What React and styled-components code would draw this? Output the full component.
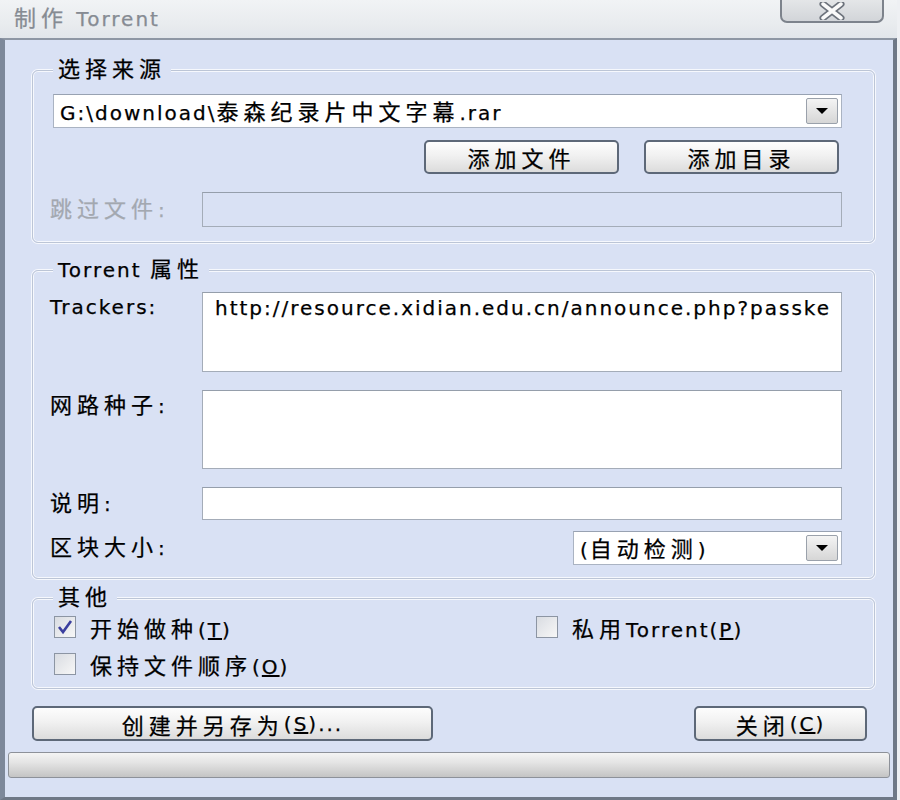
import React from 'react';
import styled, { createGlobalStyle } from 'styled-components';

const GlobalStyle = createGlobalStyle`
  html, body {
    margin: 0;
    padding: 0;
    background: #eef0f3;
  }
  body {
    font-family: "DejaVu Sans", "Noto Sans CJK SC", sans-serif;
    font-size: 20px;
    color: #000;
    -webkit-text-stroke: 0.25px currentColor;
  }
`;

const PANEL = '#d9e1f4';

const Window = styled.div`
  width: 897px;
  height: 800px;
  display: flex;
  flex-direction: column;
`;

const TitleBar = styled.div`
  height: 38px;
  box-sizing: border-box;
  flex-shrink: 0;
  display: flex;
  align-items: center;
  justify-content: space-between;
  padding: 0 0 6px 14px;
  background: linear-gradient(180deg, #f1f3f5 0%, #e9ecef 60%, #e2e6ea 100%);
`;

const Title = styled.span`
  color: #868b93;
  letter-spacing: 2px;
`;

const CloseButton = styled.div`
  align-self: flex-start;
  width: 100px;
  height: 21px;
  margin-right: 13px;
  border: 2px solid #7d838c;
  border-top: none;
  border-radius: 0 0 7px 7px;
  background: linear-gradient(180deg, #e4e6e8, #d2d5d9);
  display: flex;
  align-items: center;
  justify-content: center;
`;

const Body = styled.div`
  flex: 1;
  display: flex;
  flex-direction: column;
  background: ${PANEL};
  border-top: 2px solid #8e97a4;
  border-left: 5px solid #7d889a;
  border-right: 4px solid #6f7886;
  border-bottom: 3px solid #6f7886;
  padding: 0 3px;
  min-width: 0;
`;

const Group = styled.fieldset`
  margin: ${(p) => p.$top}px 15px 0 24px;
  padding: 0;
  min-width: 0;
  border: 1px solid #bcc5d6;
  border-radius: 6px;
  box-shadow: 0 0 0 1px #f6f8fd, inset 0 0 0 1px #f6f8fd;
`;

const Legend = styled.legend`
  margin-left: 20px;
  padding: 0 5px;
  line-height: 24px;
  background: ${PANEL};
  letter-spacing: 2px;
`;

const GroupContent = styled.div`
  padding: ${(p) => p.$pad};
`;

const Cjk = styled.span`
  font-size: 22px;
  letter-spacing: 5px;
`;

const Key = styled.span`
  text-decoration: underline;
`;

const Combo = styled.div`
  height: 34px;
  box-sizing: border-box;
  width: ${(p) => p.$width || 'auto'};
  margin-left: ${(p) => p.$indent || 0}px;
  justify-self: ${(p) => (p.$width ? 'end' : 'stretch')};
  display: flex;
  align-items: center;
  background: #fff;
  border: 1px solid #aab3c2;
  border-top-color: #98a2b2;
  padding: 0 3px 0 6px;
  letter-spacing: 2px;
  white-space: nowrap;
`;

const ComboText = styled.span`
  flex: 1;
  padding-bottom: 3px;
`;

const DropButton = styled.div`
  width: 32px;
  height: 26px;
  box-sizing: border-box;
  border: 1px solid #9aa1ab;
  border-radius: 2px;
  background: linear-gradient(180deg, #f4f4f4, #d6d6d6);
  display: flex;
  align-items: center;
  justify-content: center;
`;

const ButtonRow = styled.div`
  display: flex;
  justify-content: ${(p) => p.$justify || 'flex-end'};
  gap: 25px;
  margin: ${(p) => p.$margin};
`;

const Button = styled.div`
  width: ${(p) => p.$width}px;
  height: ${(p) => p.$height || 34}px;
  box-sizing: border-box;
  border: 2px solid #5d6878;
  border-radius: 5px;
  background: linear-gradient(180deg, #fdfdfd 0%, #f1f1f1 45%, #dcdcdc 100%);
  display: flex;
  align-items: center;
  justify-content: center;
  letter-spacing: 2px;
`;

const FieldRow = styled.div`
  display: grid;
  grid-template-columns: 152px minmax(0, 1fr);
  align-items: ${(p) => (p.$top ? 'start' : 'center')};
  margin-top: ${(p) => p.$gap || 0}px;
`;

const Label = styled.span`
  line-height: 24px;
  padding-top: ${(p) => p.$padTop || 0}px;
  color: ${(p) => (p.$disabled ? '#a3a8b0' : '#000')};
  letter-spacing: 2px;
`;

const TextBox = styled.div`
  height: ${(p) => p.$height}px;
  box-sizing: border-box;
  min-width: 0;
  background: ${(p) => (p.$disabled ? PANEL : '#fff')};
  border: 1px solid #a4acb8;
  border-top-color: #959eab;
  padding: 3px 12px;
  line-height: 24px;
  letter-spacing: 2px;
  white-space: nowrap;
`;

const CheckGrid = styled.div`
  display: grid;
  grid-template-columns: 482px 1fr;
  row-gap: 13px;
`;

const CheckItem = styled.div`
  display: flex;
  align-items: center;
  gap: 14px;
  height: 24px;
  letter-spacing: 2px;
`;

const Box = styled.span`
  width: 22px;
  height: 22px;
  box-sizing: border-box;
  border: 1px solid #8c95a3;
  background: linear-gradient(135deg, #d9dce2, #f7f7f7);
  display: flex;
  align-items: center;
  justify-content: center;
`;

const Progress = styled.div`
  margin-top: 11px;
  height: 26px;
  box-sizing: border-box;
  border: 1px solid #8d9199;
  border-radius: 3px;
  background: linear-gradient(180deg, #f4f4f4 0%, #e4e4e4 40%, #c4c4c4 100%);
`;

const Arrow = () => (
  <svg width="14" height="8" viewBox="0 0 14 8">
    <path d="M1 1 H13 L7 7 Z" fill="#000" />
  </svg>
);

const Checkbox = ({ checked }) => (
  <Box>
    {checked && (
      <svg width="16" height="16" viewBox="0 0 16 16">
        <path d="M2 8 L6 13 L14 2" fill="none" stroke="#3b3f9e" strokeWidth="2.6" />
      </svg>
    )}
  </Box>
);

export default function App() {
  return (
    <>
      <GlobalStyle />
      <Window>
        <TitleBar>
          <Title>
            <Cjk>制作</Cjk> Torrent
          </Title>
          <CloseButton>
            <svg width="32" height="18" viewBox="0 0 32 18">
              <path d="M7 2 L25 16 M25 2 L7 16" stroke="#6d737c" strokeWidth="7" strokeLinecap="round" />
              <path d="M7 2 L25 16 M25 2 L7 16" stroke="#fafafa" strokeWidth="3.5" strokeLinecap="round" />
            </svg>
          </CloseButton>
        </TitleBar>

        <Body>
          <Group $top={18}>
            <Legend>
              <Cjk>选择来源</Cjk>
            </Legend>
            <GroupContent $pad="12px 32px 15px 17px">
              <Combo $indent={3}>
                <ComboText>
                  G:\download\<Cjk>泰森纪录片中文字幕</Cjk>.rar
                </ComboText>
                <DropButton>
                  <Arrow />
                </DropButton>
              </Combo>
              <ButtonRow $margin="12px 3px 0 0">
                <Button $width={195}>
                  <Cjk>添加文件</Cjk>
                </Button>
                <Button $width={195}>
                  <Cjk>添加目录</Cjk>
                </Button>
              </ButtonRow>
              <FieldRow $gap={18}>
                <Label $disabled>
                  <Cjk>跳过文件</Cjk>:
                </Label>
                <TextBox $height={35} $disabled />
              </FieldRow>
            </GroupContent>
          </Group>

          <Group $top={15}>
            <Legend>
              Torrent <Cjk>属性</Cjk>
            </Legend>
            <GroupContent $pad="10px 32px 13px 17px">
              <FieldRow $top>
                <Label $padTop={3}>Trackers:</Label>
                <TextBox $height={80}>http://resource.xidian.edu.cn/announce.php?passke</TextBox>
              </FieldRow>
              <FieldRow $top $gap={18}>
                <Label $padTop={4}>
                  <Cjk>网路种子</Cjk>:
                </Label>
                <TextBox $height={79} />
              </FieldRow>
              <FieldRow $gap={18}>
                <Label>
                  <Cjk>说明</Cjk>:
                </Label>
                <TextBox $height={33} />
              </FieldRow>
              <FieldRow $gap={11}>
                <Label>
                  <Cjk>区块大小</Cjk>:
                </Label>
                <Combo $width="269px">
                  <ComboText>
                    (<Cjk>自动检测</Cjk>)
                  </ComboText>
                  <DropButton>
                    <Arrow />
                  </DropButton>
                </Combo>
              </FieldRow>
            </GroupContent>
          </Group>

          <Group $top={7}>
            <Legend>
              <Cjk>其他</Cjk>
            </Legend>
            <GroupContent $pad="5px 0 12px 21px">
              <CheckGrid>
                <CheckItem>
                  <Checkbox checked />
                  <span>
                    <Cjk>开始做种</Cjk>(<Key>T</Key>)
                  </span>
                </CheckItem>
                <CheckItem>
                  <Checkbox />
                  <span>
                    <Cjk>私用</Cjk>Torrent(<Key>P</Key>)
                  </span>
                </CheckItem>
                <CheckItem>
                  <Checkbox />
                  <span>
                    <Cjk>保持文件顺序</Cjk>(<Key>O</Key>)
                  </span>
                </CheckItem>
              </CheckGrid>
            </GroupContent>
          </Group>

          <ButtonRow $justify="space-between" $margin="17px 23px 0 24px">
            <Button $width={401} $height={35}>
              <Cjk>创建并另存为</Cjk>(<Key>S</Key>)...
            </Button>
            <Button $width={173} $height={35}>
              <Cjk>关闭</Cjk>(<Key>C</Key>)
            </Button>
          </ButtonRow>

          <Progress />
        </Body>
      </Window>
    </>
  );
}
